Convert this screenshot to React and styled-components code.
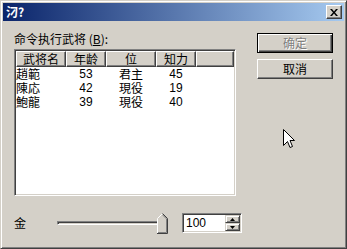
import React from "react";
import styled, { createGlobalStyle } from "styled-components";

const GlobalStyle = createGlobalStyle`
  body {
    margin: 0;
    background: #d4d0c8;
    font-family: "Noto Sans CJK SC", "Liberation Sans", sans-serif;
    font-size: 12px;
  }
`;

const officers = [
  { name: "趙範", age: 53, rank: "君主", int: 45 },
  { name: "陳応", age: 42, rank: "現役", int: 19 },
  { name: "鮑龍", age: 39, rank: "現役", int: 40 },
];

const columns = [
  { label: "武将名", width: 50 },
  { label: "年龄", width: 40 },
  { label: "位", width: 50 },
  { label: "知力", width: 40 },
];

const App = () => {
  return (
    <>
      <GlobalStyle />
      <Window>
        <TitleBar>
          <Title>汈?</Title>
          <CloseButton>
            <svg width="8" height="7" viewBox="0 0 8 7">
              <path d="M0 0h2l2 2.5L6 0h2L5 3.5 8 7H6L4 4.5 2 7H0l3-3.5z" fill="#000" />
            </svg>
          </CloseButton>
        </TitleBar>
        <Body>
          <TopArea>
            <LeftColumn>
              <FieldLabel>
                命令执行武将 (<u>B</u>):
              </FieldLabel>
              <ListBox>
                <HeaderRow>
                  {columns.map((c) => (
                    <HeaderCell key={c.label} $w={c.width}>
                      {c.label}
                    </HeaderCell>
                  ))}
                  <HeaderFiller />
                </HeaderRow>
                {officers.map((o) => (
                  <Row key={o.name}>
                    <NameCell $w={50}>{o.name}</NameCell>
                    <NumCell $w={40}>{o.age}</NumCell>
                    <Cell $w={50}>{o.rank}</Cell>
                    <NumCell $w={40}>{o.int}</NumCell>
                  </Row>
                ))}
              </ListBox>
            </LeftColumn>
            <ButtonColumn>
              <Button $default disabled>
                确定
              </Button>
              <Button>取消</Button>
            </ButtonColumn>
          </TopArea>
          <BottomRow>
            <GoldLabel>金</GoldLabel>
            <Slider>
              <Track />
              <Thumb width="11" height="21" viewBox="0 0 11 21">
                <path d="M0.5 20.5V5.5L5.5 0.5L10.5 5.5V20.5Z" fill="#d4d0c8" />
                <path d="M0.5 20V5.5L5.5 0.5" fill="none" stroke="#fff" />
                <path d="M5.5 0.5L10.5 5.5V20.5H0" fill="none" stroke="#404040" />
                <path d="M5.5 1.9L9.5 5.9V19.5H1" fill="none" stroke="#808080" />
              </Thumb>
            </Slider>
            <SpinBox>
              <SpinText>100</SpinText>
              <SpinButtons>
                <SpinButton>
                  <svg width="5" height="3" viewBox="0 0 5 3">
                    <path d="M2.5 0L5 3H0z" fill="#000" />
                  </svg>
                </SpinButton>
                <SpinButton>
                  <svg width="5" height="3" viewBox="0 0 5 3">
                    <path d="M0 0h5L2.5 3z" fill="#000" />
                  </svg>
                </SpinButton>
              </SpinButtons>
            </SpinBox>
          </BottomRow>
        </Body>
        <Cursor width="12" height="20" viewBox="0 0 12 20">
          <path
            d="M0.5 0.5V16.5L4.5 12.5L7 18.5L9.5 17.5L7 11.5H11.5Z"
            fill="#fff"
            stroke="#000"
            strokeLinejoin="miter"
          />
        </Cursor>
      </Window>
    </>
  );
};

export default App;

const Window = styled.div`
  position: relative;
  box-sizing: border-box;
  width: 347px;
  height: 249px;
  padding: 2px;
  background: #d4d0c8;
  border: 1px solid;
  border-color: #d4d0c8 #404040 #404040 #d4d0c8;
  box-shadow: inset 1px 1px #fff, inset -1px -1px #808080;
  display: flex;
  flex-direction: column;
`;

const TitleBar = styled.div`
  height: 18px;
  display: flex;
  align-items: center;
  justify-content: space-between;
  padding: 0 2px 0 3px;
  background: linear-gradient(to right, #0a246a, #a6caf0);
`;

const Title = styled.span`
  color: #fff;
  font-weight: bold;
  font-size: 12px;
  line-height: 14px;
`;

const CloseButton = styled.div`
  box-sizing: border-box;
  width: 16px;
  height: 14px;
  display: flex;
  align-items: center;
  justify-content: center;
  background: #d4d0c8;
  border: 1px solid;
  border-color: #fff #404040 #404040 #fff;
  box-shadow: inset -1px -1px #808080;
`;

const Body = styled.div`
  display: flex;
  flex-direction: column;
  padding: 10px 0 0 11px;
`;

const TopArea = styled.div`
  display: grid;
  grid-template-columns: 222px 76px;
  column-gap: 21px;
`;

const LeftColumn = styled.div`
  display: flex;
  flex-direction: column;
`;

const FieldLabel = styled.div`
  height: 16px;
  line-height: 16px;
  margin-bottom: 2px;
  color: #000;
  u {
    text-decoration: underline;
  }
`;

const ListBox = styled.div`
  box-sizing: border-box;
  height: 147px;
  background: #fff;
  border: 1px solid;
  border-color: #808080 #fff #fff #808080;
  box-shadow: inset 1px 1px #404040, inset -1px -1px #d4d0c8;
  padding: 1px;
  display: flex;
  flex-direction: column;
`;

const HeaderRow = styled.div`
  display: flex;
  height: 16px;
`;

const HeaderCell = styled.div`
  box-sizing: border-box;
  width: ${(p) => p.$w}px;
  height: 16px;
  line-height: 14px;
  text-align: center;
  background: #d4d0c8;
  border: 1px solid;
  border-color: #fff #404040 #404040 #fff;
  box-shadow: inset -1px -1px #808080;
`;

const HeaderFiller = styled(HeaderCell)`
  flex: 1;
`;

const Row = styled.div`
  display: flex;
  height: 14px;
  line-height: 14px;
`;

const Cell = styled.div`
  width: ${(p) => p.$w}px;
  text-align: center;
`;

const NameCell = styled(Cell)`
  text-align: left;
`;

const NumCell = styled(Cell)`
  font-family: "Liberation Sans", sans-serif;
  font-size: 12px;
`;

const ButtonColumn = styled.div`
  display: flex;
  flex-direction: column;
  gap: 6px;
  padding-top: 2px;
`;

const Button = styled.button`
  box-sizing: border-box;
  width: 76px;
  height: 20px;
  padding: 0;
  background: #d4d0c8;
  font-family: "Noto Sans CJK SC", sans-serif;
  font-size: 12px;
  line-height: 16px;
  color: #000;
  border: 1px solid;
  border-color: ${(p) => (p.$default ? "#000" : "#fff #404040 #404040 #fff")};
  box-shadow: ${(p) =>
    p.$default
      ? "inset 1px 1px #fff, inset -1px -1px #404040, inset -2px -2px #808080"
      : "inset -1px -1px #808080"};
  &:disabled {
    color: #808080;
    text-shadow: 1px 1px #fff;
  }
`;

const BottomRow = styled.div`
  display: flex;
  align-items: center;
  height: 20px;
  margin-top: 17px;
`;

const GoldLabel = styled.div`
  width: 43px;
  line-height: 16px;
`;

const Slider = styled.div`
  position: relative;
  width: 111px;
  height: 21px;
  display: flex;
  align-items: center;
`;

const Track = styled.div`
  box-sizing: border-box;
  width: 102px;
  height: 4px;
  border: 1px solid;
  border-color: #808080 #fff #fff #808080;
  box-shadow: inset 1px 1px #404040;
`;

const Thumb = styled.svg`
  position: absolute;
  left: 100px;
  top: 0;
`;

const SpinBox = styled.div`
  box-sizing: border-box;
  margin-left: 14px;
  width: 60px;
  height: 20px;
  display: flex;
  background: #fff;
  border: 1px solid;
  border-color: #808080 #fff #fff #808080;
  box-shadow: inset 1px 1px #404040, inset -1px -1px #d4d0c8;
  padding: 1px;
`;

const SpinText = styled.div`
  flex: 1;
  padding-left: 2px;
  font-family: "Liberation Sans", sans-serif;
  font-size: 12px;
  line-height: 16px;
`;

const SpinButtons = styled.div`
  display: flex;
  flex-direction: column;
  width: 15px;
`;

const SpinButton = styled.div`
  box-sizing: border-box;
  flex: 1;
  display: flex;
  align-items: center;
  justify-content: center;
  background: #d4d0c8;
  border: 1px solid;
  border-color: #d4d0c8 #404040 #404040 #d4d0c8;
  box-shadow: inset 1px 1px #fff, inset -1px -1px #808080;
`;

const Cursor = styled.svg`
  position: absolute;
  left: 282px;
  top: 128px;
`;
